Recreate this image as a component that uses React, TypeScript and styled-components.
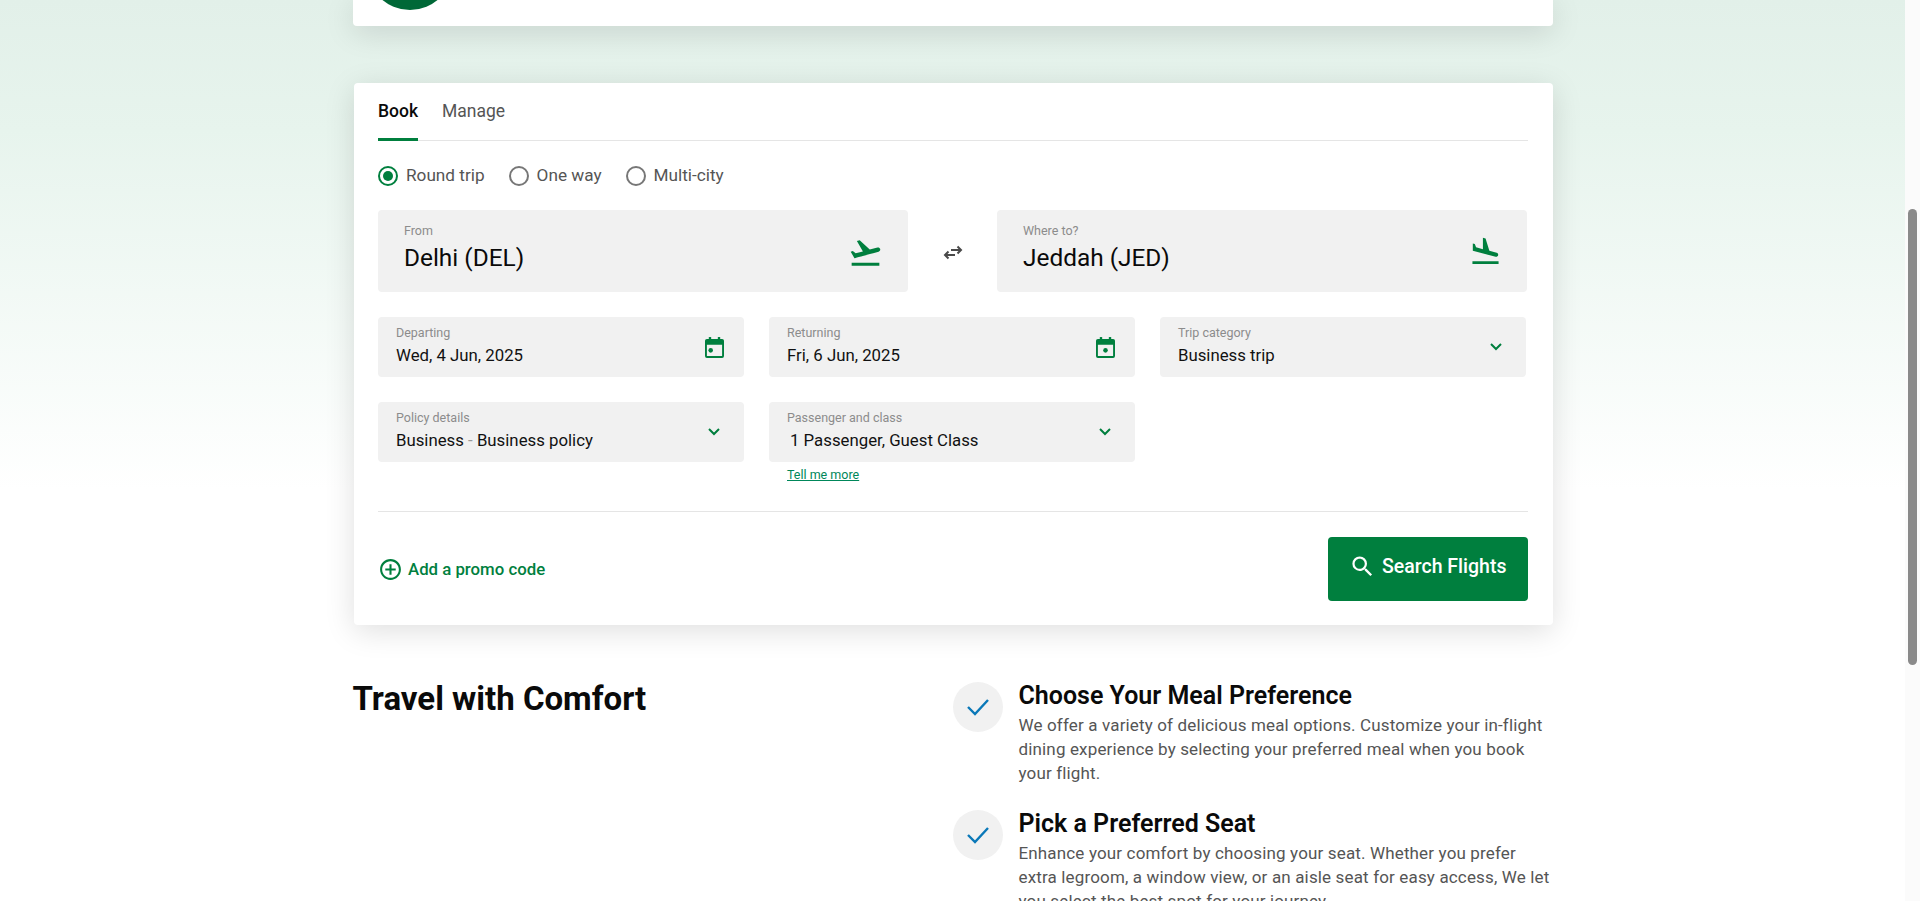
import { ReactNode } from "react";
import styled, { createGlobalStyle } from "styled-components";
import { MdAddCircleOutline, MdFlightLand, MdFlightTakeoff, MdSearch } from "react-icons/md";

const GREEN = "#007f3e";
const FIELD_BG = "#f1f1f1";

const GlobalStyle = createGlobalStyle`
  html, body {
    margin: 0;
    height: 100%;
    overflow: hidden;
    background: #fff;
    font-family: Roboto, "Liberation Sans", sans-serif;
  }
  * {
    box-sizing: border-box;
  }
`;

const Page = styled.div`
  display: flex;
  height: 901px;
`;

const Main = styled.main`
  flex: 1;
  height: 901px;
  overflow: hidden;
  background: linear-gradient(#e2f0e9 0, #e7f4ed 130px, #ffffff 490px);
`;

const ScrollTrack = styled.div`
  width: 15px;
  background: #fbfbfb;
  padding: 209px 3px 0;
`;

const ScrollThumb = styled.div`
  height: 456px;
  border-radius: 5px;
  background: #8a8a8a;
`;

const Content = styled.div`
  width: 1200px;
  margin-inline: auto;
`;

const TopCard = styled.section`
  height: 26px;
  overflow: hidden;
  border-radius: 0 0 4px 4px;
  background: #fff;
  box-shadow: 0 6px 30px rgba(0, 0, 0, 0.13);
  padding-left: 14px;
`;

const Avatar = styled.div`
  width: 86px;
  height: 86px;
  margin-top: -76px;
  border-radius: 50%;
  background: #006837;
`;

const FlightCard = styled.section`
  margin: 57px 0 0 1px;
  padding: 0 24.5px 24px;
  border-radius: 4px;
  background: #fff;
  box-shadow: 0 6px 30px rgba(0, 0, 0, 0.13);
`;

const Tabs = styled.div`
  display: flex;
  gap: 24px;
  height: 58px;
  border-bottom: 1px solid #e5e5e5;
`;

const Tab = styled.div<{ $active?: boolean }>`
  height: 58px;
  padding-top: 18px;
  line-height: 20px;
  font-size: 17.5px;
  font-weight: ${(p) => (p.$active ? 500 : 400)};
  color: ${(p) => (p.$active ? "#0a0a0a" : "#555")};
  border-bottom: 3px solid ${(p) => (p.$active ? GREEN : "transparent")};
`;

const RadioRow = styled.div`
  display: flex;
  gap: 24px;
  margin-top: 25px;
`;

const RadioItem = styled.label`
  display: flex;
  align-items: center;
  gap: 8px;
  height: 20px;
  font-size: 17.2px;
  line-height: 18px;
  color: #555;
`;

const RadioText = styled.span`
  padding-bottom: 2px;
`;

const RadioCircle = styled.span<{ $checked?: boolean }>`
  display: flex;
  align-items: center;
  justify-content: center;
  width: 20px;
  height: 20px;
  border-radius: 50%;
  border: 2px solid ${(p) => (p.$checked ? GREEN : "#777")};
  &::after {
    content: "";
    width: 10px;
    height: 10px;
    border-radius: 50%;
    background: ${(p) => (p.$checked ? GREEN : "transparent")};
  }
`;

const RouteRow = styled.div`
  display: grid;
  grid-template-columns: 530px 89px 530px;
  margin-top: 24px;
`;

const RouteField = styled.div`
  display: flex;
  align-items: center;
  justify-content: space-between;
  height: 82px;
  padding: 0 25px 0 26px;
  border-radius: 4px;
  background: ${FIELD_BG};
  color: ${GREEN};
`;

const RouteText = styled.div`
  padding-bottom: 5px;
`;

const RouteLabel = styled.div`
  line-height: 16px;
  font-size: 12.5px;
  color: #8c8c8c;
`;

const RouteValue = styled.div`
  margin-top: 3px;
  line-height: 32px;
  font-size: 24.4px;
  color: #0a0a0a;
`;

const TakeoffIcon = styled(MdFlightTakeoff)`
  margin-top: 2px;
`;

const SwapBox = styled.div`
  display: flex;
  align-items: center;
  justify-content: center;
  padding-top: 4px;
`;

const FieldGrid = styled.div`
  display: grid;
  grid-template-columns: repeat(3, 366px);
  gap: 25px;
  margin-top: 25px;
`;

const Field = styled.div`
  display: flex;
  align-items: center;
  justify-content: space-between;
  height: 60px;
  padding: 0 20px 0 18px;
  border-radius: 4px;
  background: ${FIELD_BG};
`;

const FieldText = styled.div`
  padding-bottom: 4px;
`;

const FieldLabel = styled.div`
  line-height: 16px;
  font-size: 12.5px;
  color: #8c8c8c;
`;

const FieldValue = styled.div<{ $indent?: boolean }>`
  margin-top: 4px;
  padding-left: ${(p) => (p.$indent ? 3 : 0)}px;
  line-height: 20px;
  font-size: 16.8px;
  color: #111;
`;

const Dash = styled.span`
  color: #999;
`;

const TellMore = styled.a`
  display: block;
  margin: 5px 0 0 18px;
  line-height: 16px;
  font-size: 12.5px;
  color: #00875a;
  text-decoration: underline;
`;

const Divider = styled.hr`
  margin: 28px 0 0;
  border: 0;
  border-top: 1px solid #e5e5e5;
`;

const CardFooter = styled.div`
  display: flex;
  align-items: center;
  justify-content: space-between;
  margin-top: 25px;
`;

const PromoLink = styled.a`
  display: flex;
  align-items: center;
  gap: 5px;
  font-size: 16.8px;
  font-weight: 500;
  color: ${GREEN};
`;

const SearchButton = styled.button`
  display: flex;
  align-items: center;
  gap: 6px;
  width: 200px;
  height: 64px;
  padding: 0 0 6px 21px;
  border: 0;
  border-radius: 4px;
  background: ${GREEN};
  color: #fff;
  font-family: inherit;
  font-size: 19.5px;
  font-weight: 500;
`;

const ComfortSection = styled.section`
  display: grid;
  grid-template-columns: 600px 600px;
  margin-top: 54px;
`;

const ComfortTitle = styled.h2`
  margin: 4px 0 0;
  line-height: 32px;
  font-size: 33px;
  font-weight: 700;
  color: #0a0a0a;
`;

const FeatureList = styled.div`
  display: flex;
  flex-direction: column;
  gap: 22px;
`;

const Feature = styled.article`
  display: flex;
  gap: 16px;
`;

const CheckBadge = styled.div`
  flex: none;
  display: flex;
  align-items: center;
  justify-content: center;
  width: 50px;
  height: 50px;
  margin-top: 3px;
  border-radius: 50%;
  background: ${FIELD_BG};
`;

const FeatureTitle = styled.h3`
  margin: 1px 0;
  line-height: 32px;
  font-size: 25px;
  font-weight: 600;
  color: #0a0a0a;
`;

const FeatureText = styled.p`
  margin: 0 -3px 0 0;
  line-height: 24px;
  font-size: 17px;
  letter-spacing: 0.15px;
  color: #555;
`;

const ChevronSvg = styled.svg`
  margin-right: 4px;
`;

function SwapIcon() {
  return (
    <svg width="20" height="18" viewBox="0 0 20 18" fill="none" stroke="#4a4a4a" strokeWidth="2">
      <path d="M8 6h10M14.5 2.5L18 6l-3.5 3.5M12 11H2M5.5 7.5L2 11l3.5 3.5" />
    </svg>
  );
}

function CalendarIcon({ dotLeft }: { dotLeft?: boolean }) {
  return (
    <svg width="19" height="21" viewBox="0 0 20 22" fill={GREEN}>
      <rect x="4" y="0" width="2.5" height="4" />
      <rect x="13.5" y="0" width="2.5" height="4" />
      <path d="M2 2h16a2 2 0 0 1 2 2v16a2 2 0 0 1-2 2H2a2 2 0 0 1-2-2V4a2 2 0 0 1 2-2zm0 6v12h16V8H2z" />
      <circle cx={dotLeft ? 6 : 10} cy="14" r="2.4" />
    </svg>
  );
}

function Chevron() {
  return (
    <ChevronSvg width="12" height="8" viewBox="0 0 12 8" fill="none" stroke={GREEN} strokeWidth="2">
      <path d="M1 1l5 5 5-5" />
    </ChevronSvg>
  );
}

function CheckMark() {
  return (
    <svg width="24" height="18" viewBox="0 0 24 18" fill="none" stroke="#0a78b8" strokeWidth="2.4">
      <path d="M2 9l7 7L22 2" />
    </svg>
  );
}

function SelectField({ label, value, icon, indent }: { label: string; value: ReactNode; icon: ReactNode; indent?: boolean }) {
  return (
    <Field>
      <FieldText>
        <FieldLabel>{label}</FieldLabel>
        <FieldValue $indent={indent}>{value}</FieldValue>
      </FieldText>
      {icon}
    </Field>
  );
}

const features = [
  {
    title: "Choose Your Meal Preference",
    text: "We offer a variety of delicious meal options. Customize your in-flight dining experience by selecting your preferred meal when you book your flight.",
  },
  {
    title: "Pick a Preferred Seat",
    text: "Enhance your comfort by choosing your seat. Whether you prefer extra legroom, a window view, or an aisle seat for easy access, We let you select the best spot for your journey.",
  },
];

export default function App() {
  return (
    <Page>
      <GlobalStyle />
      <Main>
        <Content>
          <TopCard>
            <Avatar />
          </TopCard>

          <FlightCard>
            <Tabs>
              <Tab $active>Book</Tab>
              <Tab>Manage</Tab>
            </Tabs>

            <RadioRow>
              <RadioItem>
                <RadioCircle $checked />
                <RadioText>Round trip</RadioText>
              </RadioItem>
              <RadioItem>
                <RadioCircle />
                <RadioText>One way</RadioText>
              </RadioItem>
              <RadioItem>
                <RadioCircle />
                <RadioText>Multi-city</RadioText>
              </RadioItem>
            </RadioRow>

            <RouteRow>
              <RouteField>
                <RouteText>
                  <RouteLabel>From</RouteLabel>
                  <RouteValue>Delhi (DEL)</RouteValue>
                </RouteText>
                <TakeoffIcon size={35} />
              </RouteField>
              <SwapBox>
                <SwapIcon />
              </SwapBox>
              <RouteField>
                <RouteText>
                  <RouteLabel>Where to?</RouteLabel>
                  <RouteValue>Jeddah (JED)</RouteValue>
                </RouteText>
                <MdFlightLand size={33} />
              </RouteField>
            </RouteRow>

            <FieldGrid>
              <SelectField label="Departing" value="Wed, 4 Jun, 2025" icon={<CalendarIcon dotLeft />} />
              <SelectField label="Returning" value="Fri, 6 Jun, 2025" icon={<CalendarIcon />} />
              <SelectField label="Trip category" value="Business trip" icon={<Chevron />} />
              <SelectField
                label="Policy details"
                value={
                  <>
                    Business <Dash>-</Dash> Business policy
                  </>
                }
                icon={<Chevron />}
              />
              <div>
                <SelectField label="Passenger and class" value="1 Passenger, Guest Class" icon={<Chevron />} indent />
                <TellMore>Tell me more</TellMore>
              </div>
            </FieldGrid>

            <Divider />

            <CardFooter>
              <PromoLink>
                <MdAddCircleOutline size={25} />
                Add a promo code
              </PromoLink>
              <SearchButton>
                <MdSearch size={27} />
                Search Flights
              </SearchButton>
            </CardFooter>
          </FlightCard>

          <ComfortSection>
            <ComfortTitle>Travel with Comfort</ComfortTitle>
            <FeatureList>
              {features.map((f) => (
                <Feature key={f.title}>
                  <CheckBadge>
                    <CheckMark />
                  </CheckBadge>
                  <div>
                    <FeatureTitle>{f.title}</FeatureTitle>
                    <FeatureText>{f.text}</FeatureText>
                  </div>
                </Feature>
              ))}
            </FeatureList>
          </ComfortSection>
        </Content>
      </Main>
      <ScrollTrack>
        <ScrollThumb />
      </ScrollTrack>
    </Page>
  );
}
